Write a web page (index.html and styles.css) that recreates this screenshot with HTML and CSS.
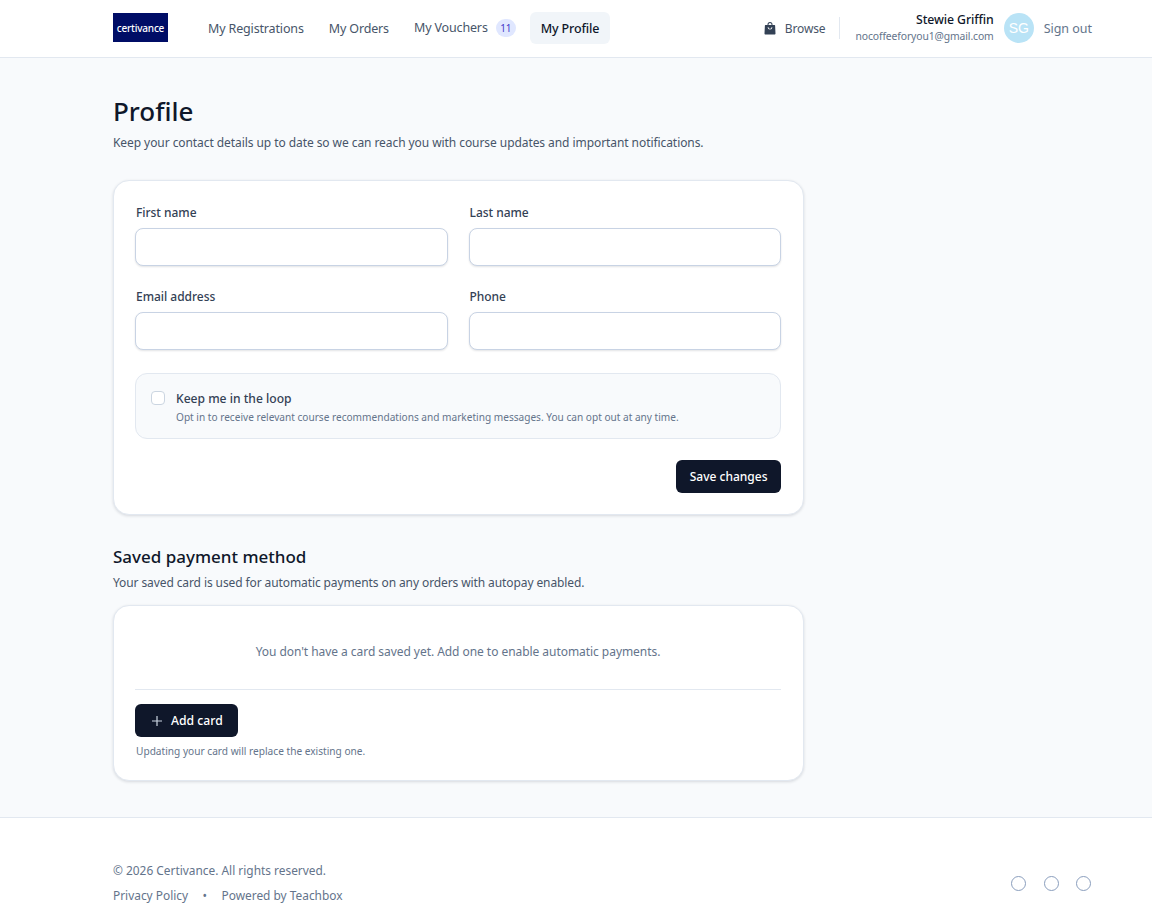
FILE: index.html
```html
<!DOCTYPE html>
<html lang="en">
<head>
  <meta charset="UTF-8" />
  <meta name="viewport" content="width=device-width, initial-scale=1.0" />
  <title>Profile</title>
  <link rel="stylesheet" href="styles.css">
</head>
<body>

<header class="topbar">
  <div class="logo">certivance</div>
  <nav class="nav">
    <a class="nav-link">My Registrations</a>
    <a class="nav-link">My Orders</a>
    <a class="nav-link nav-vouchers"><span class="nav-raise">My Vouchers</span> <span class="badge">11</span></a>
    <a class="nav-link active">My Profile</a>
  </nav>
  <div class="account">
    <a class="browse">
      <svg class="bag" viewBox="0 0 12 13" width="12" height="13">
        <path fill="#334155" fill-rule="evenodd" d="M3.5 3V2.600a2.500 2.500 0 0 1 5 0V3h2.100c.3 0 .5.2.5.5l.4 8c0 .6-.4 1-1 1H1.500c-.6 0-1-.4-1-1l.4-8c0-.3.2-.5.5-.5zm1 0h3V2.600a1.500 1.500 0 0 0-3 0zM3.600 5.200a2.400 2.400 0 0 0 4.800 0h-.9a1.500 1.500 0 0 1-3 0z"/>
      </svg>
      Browse
    </a>
    <div class="user">
      <div class="user-name">Stewie Griffin</div>
      <div class="user-email">nocoffeeforyou1@gmail.com</div>
    </div>
    <div class="avatar">SG</div>
    <a class="signout">Sign out</a>
  </div>
</header>

<main class="page">
  <h1>Profile</h1>
  <p class="lead">Keep your contact details up to date so we can reach you with course updates and important notifications.</p>

  <section class="card profile-card">
    <div class="fields">
      <label class="field">First name<input type="text" /></label>
      <label class="field">Last name<input type="text" /></label>
      <label class="field">Email address<input type="text" /></label>
      <label class="field">Phone<input type="text" /></label>
    </div>
    <div class="optin">
      <span class="checkbox"></span>
      <div>
        <div class="optin-title">Keep me in the loop</div>
        <div class="optin-text">Opt in to receive relevant course recommendations and marketing messages. You can opt out at any time.</div>
      </div>
    </div>
    <div class="actions">
      <button class="btn">Save changes</button>
    </div>
  </section>

  <h2>Saved payment method</h2>
  <p class="lead small-lead">Your saved card is used for automatic payments on any orders with autopay enabled.</p>

  <section class="card payment-card">
    <p class="empty">You don't have a card saved yet. Add one to enable automatic payments.</p>
    <div class="divider"></div>
    <button class="btn btn-add">
      <svg viewBox="0 0 12 12" width="12" height="12"><path d="M6 1v10M1 6h10" stroke="#cbd5e1" stroke-width="1.200" fill="none"/></svg>
      Add card
    </button>
    <p class="hint">Updating your card will replace the existing one.</p>
  </section>
</main>

<footer class="footer">
  <div>
    <div class="copy">© 2026 Certivance. All rights reserved.</div>
    <div class="footer-links">
      <a>Privacy Policy</a>
      <span class="dot">•</span>
      <a>Powered by Teachbox</a>
    </div>
  </div>
  <div class="socials">
    <span class="ring"></span>
    <span class="ring"></span>
    <span class="ring"></span>
  </div>
</footer>

</body>
</html>
```

FILE: styles.css
```css
* {
  box-sizing: border-box;
}
body {
  margin: 0;
  font-family: "Noto Sans", "Open Sans", sans-serif;
  font-size: 12.500px;
  letter-spacing: -0.15px;
  color: #0f172a;
  background: #fff;
}

.topbar {
  height: 58px;
  display: flex;
  align-items: center;
  padding: 0 60px 1px 113px;
  background: #fff;
  border-bottom: 1px solid #e2e8f0;
}

.logo {
  width: 55px;
  height: 29px;
  margin-top: -1px;
  display: flex;
  align-items: center;
  justify-content: center;
  background: #000d66;
  color: #fff;
  font-size: 10px;
  font-weight: 500;
  letter-spacing: -0.2px;
}

.nav {
  display: flex;
  align-items: center;
  margin-left: 29px;
  gap: 3px;
}

.nav-link {
  padding: 0 11px;
  height: 32px;
  display: flex;
  align-items: center;
  color: #475569;
  border-radius: 6px;
  white-space: nowrap;
}

.nav-vouchers {
  gap: 8px;
}

.nav-raise {
  margin-top: -2px;
}

.badge {
  width: 20px;
  height: 18px;
  border-radius: 9px;
  background: #e0e7ff;
  color: #4338ca;
  font-size: 10px;
  display: flex;
  align-items: center;
  justify-content: center;
}

.active {
  background: #f1f5f9;
  color: #0f172a;
  font-weight: 500;
}

.account {
  margin-left: auto;
  display: flex;
  align-items: center;
}

.browse {
  display: flex;
  align-items: center;
  gap: 9px;
  color: #475569;
  font-size: 12px;
  padding-right: 14px;
  height: 22px;
  border-right: 1px solid #e2e8f0;
}

.user {
  margin-left: 15px;
  text-align: right;
}

.user-name {
  font-size: 12.300px;
  letter-spacing: -0.1px;
  font-weight: 500;
  line-height: 16px;
}

.user-email {
  font-size: 10.350px;
  letter-spacing: -0.1px;
  line-height: 16px;
  color: #64748b;
}

.avatar {
  width: 30px;
  height: 30px;
  margin-left: 10px;
  border-radius: 50%;
  background: #b9e3f6;
  color: #fff;
  font-family: "Liberation Sans", sans-serif;
  font-size: 14px;
  display: flex;
  align-items: center;
  justify-content: center;
}

.signout {
  margin-left: 10px;
  letter-spacing: -0.03px;
  color: #64748b;
}

.page {
  background: #f8fafc;
  padding: 35px 0 36px 113px;
}

h1 {
  margin: 0;
  font-size: 26px;
  font-weight: 500;
  line-height: 36px;
  letter-spacing: 0;
}

.lead {
  margin: 5px 0 0;
  font-size: 12px;
  letter-spacing: -0.07px;
  line-height: 18px;
  color: #475569;
}

.card {
  width: 691px;
  background: #fff;
  border: 1px solid #e2e8f0;
  border-radius: 16px;
  box-shadow: 0 1px 3px rgba(15, 23, 42, 0.14);
  padding: 22px 22px 21px 21px;
}

.profile-card {
  margin-top: 28px;
  height: 335px;
}

.fields {
  display: grid;
  grid-template-columns: 1fr 1fr;
  column-gap: 21px;
  row-gap: 21px;
}

.field {
  display: block;
  font-size: 12px;
  letter-spacing: -0.03px;
  font-weight: 500;
  line-height: 20px;
  text-indent: 1px;
  color: #334155;
}

.field input {
  display: block;
  width: 100%;
  height: 38px;
  margin-top: 5px;
  border: 1px solid #c8d3e4;
  border-radius: 8px;
  box-shadow: 0 1px 2px rgba(15, 23, 42, 0.12);
  background: #fff;
}

.optin {
  display: flex;
  gap: 11px;
  margin-top: 23px;
  height: 66px;
  padding: 15px;
  border: 1px solid #e2e8f0;
  border-radius: 12px;
  background: #f8fafc;
}

.checkbox {
  width: 14px;
  height: 14px;
  margin-top: 2px;
  flex: none;
  background: #fff;
  border: 1px solid #cbd5e1;
  border-radius: 4px;
}

.optin-title {
  font-size: 12.100px;
  letter-spacing: 0;
  font-weight: 500;
  line-height: 20px;
  color: #334155;
}

.optin-text {
  font-size: 10.100px;
  letter-spacing: 0;
  line-height: 16px;
  color: #64748b;
}

.actions {
  display: flex;
  justify-content: flex-end;
  margin-top: 21px;
}

.btn {
  height: 33px;
  padding: 0 13.500px;
  display: flex;
  align-items: center;
  gap: 8px;
  border: 0;
  border-radius: 6px;
  background: #0f172a;
  color: #fff;
  font-family: inherit;
  font-size: 12px;
  letter-spacing: 0;
  font-weight: 500;
}

h2 {
  margin: 29px 0 0;
  font-size: 17px;
  font-weight: 500;
  line-height: 26px;
  letter-spacing: 0;
}

.small-lead {
  margin-top: 4px;
  letter-spacing: -0.1px;
}

.payment-card {
  margin-top: 13px;
  height: 176px;
  padding-top: 21px;
}

.empty {
  margin: 15px 0 0;
  text-align: center;
  font-size: 12px;
  letter-spacing: -0.05px;
  line-height: 20px;
  color: #64748b;
}

.divider {
  height: 1px;
  margin-top: 27px;
  background: #e2e8f0;
}

.btn-add {
  margin-top: 14px;
  padding: 0 15px 0 16px;
  font-size: 12.200px;
}

.hint {
  margin: 7px 0 0;
  padding-left: 1px;
  font-size: 10.150px;
  letter-spacing: 0;
  line-height: 14px;
  color: #64748b;
}

.footer {
  display: flex;
  align-items: center;
  justify-content: space-between;
  height: 92px;
  padding: 39px 61px 0 113px;
  background: #fff;
  border-top: 1px solid #e2e8f0;
  color: #64748b;
  font-size: 11.900px;
  letter-spacing: 0;
}

.copy {
  line-height: 24px;
}

.footer-links {
  display: flex;
  gap: 14.500px;
  line-height: 26px;
}

.socials {
  display: flex;
  gap: 17.500px;
}

.ring {
  width: 15px;
  height: 15px;
  border: 1.500px solid #8a9ebd;
  border-radius: 50%;
}
```
